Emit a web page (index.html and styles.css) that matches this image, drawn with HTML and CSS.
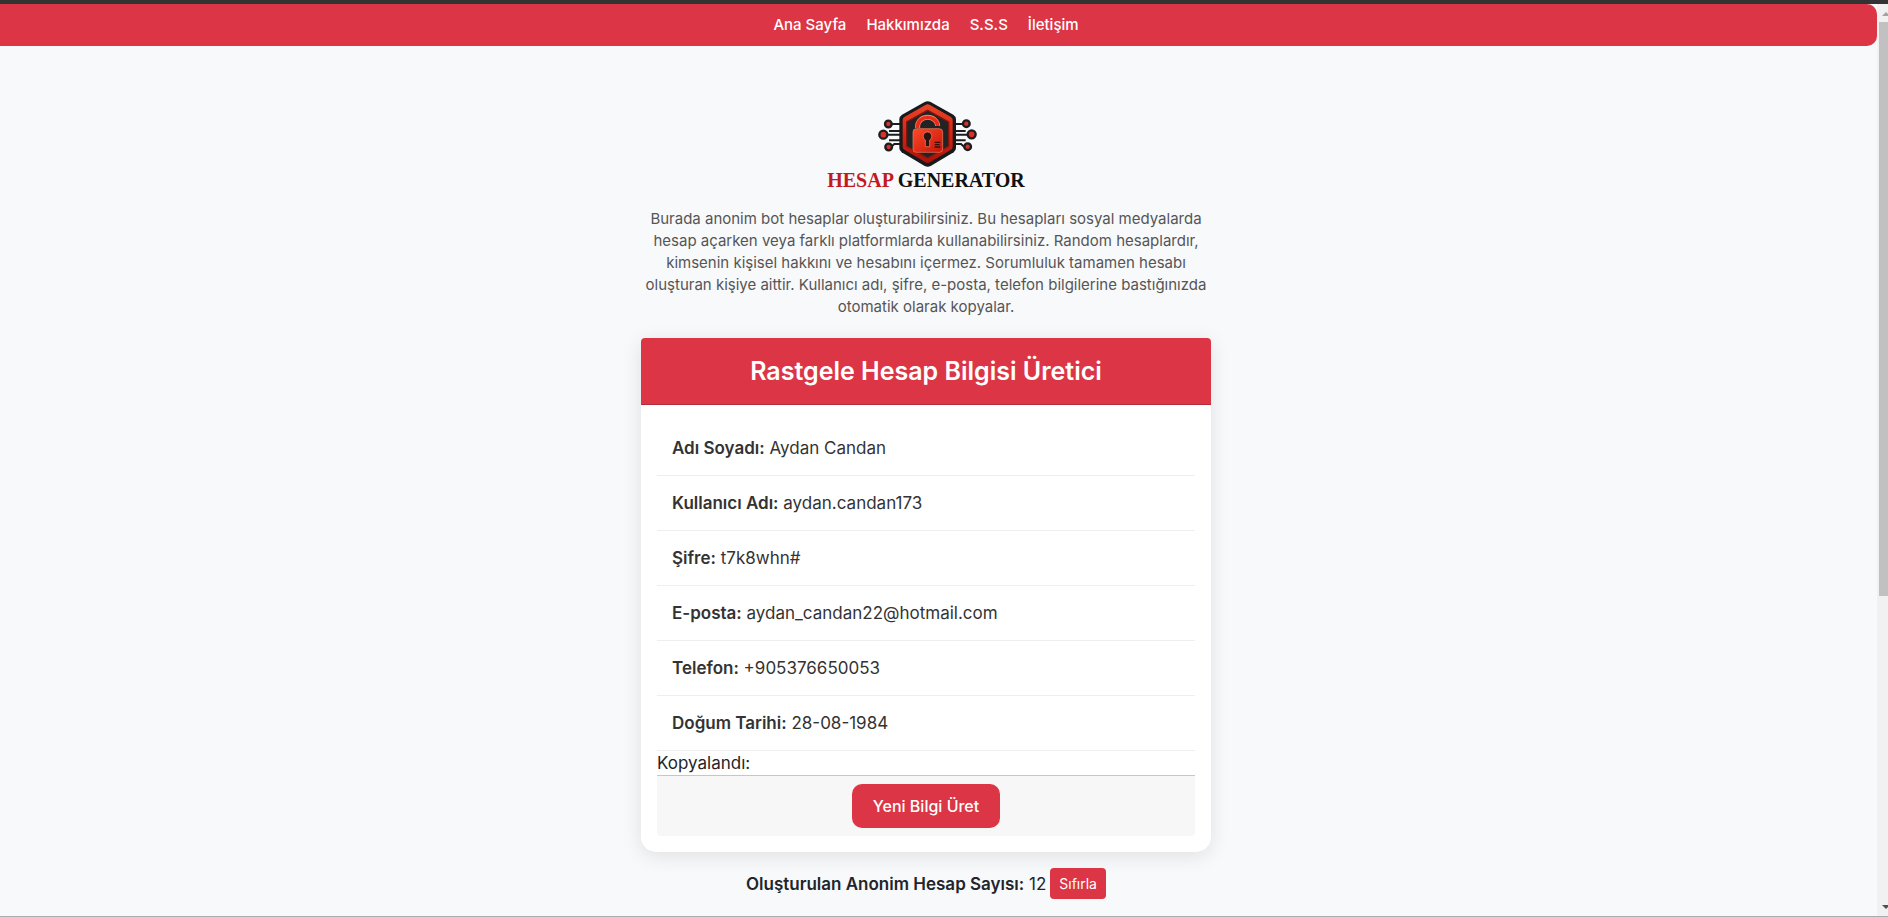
FILE: index.html
```html
<!DOCTYPE html>
<html lang="tr">
<head>
    <meta charset="UTF-8">
    <meta name="viewport" content="width=device-width, initial-scale=1.0">
    <title>Hesap Generator</title>
    <link rel="stylesheet" href="styles.css">
</head>
<body>
    <div class="page">
        <nav class="navbar">
            <a href="#">Ana Sayfa</a>
            <a href="#">Hakkımızda</a>
            <a href="#">S.S.S</a>
            <a href="#">İletişim</a>
        </nav>

        <main class="container">
            <div class="logo">
                <svg class="logo-icon" viewBox="162 30 306 204" aria-hidden="true">
                    <defs>
                        <linearGradient id="red" x1="0" y1="0" x2="0" y2="1">
                            <stop offset="0" stop-color="#e8452a"/>
                            <stop offset="0.5" stop-color="#d82414"/>
                            <stop offset="1" stop-color="#a81208"/>
                        </linearGradient>
                        <linearGradient id="lock" x1="0" y1="0" x2="1" y2="1">
                            <stop offset="0" stop-color="#fb4a28"/>
                            <stop offset="1" stop-color="#c81408"/>
                        </linearGradient>
                    </defs>
                    <!-- circuit lines -->
                    <g fill="none" stroke="#1b1d1f" stroke-width="6">
                        <path d="M208 102H240M204 123H240M196 134H240M204 151H240M210 171L220 162H240"/>
                        <path d="M430 102H400M434 123H400M440 134H400M434 151H400M430 171L420 162H400"/>
                    </g>
                    <g fill="#d9302a" stroke="#1d1c1e" stroke-width="7">
                        <circle cx="202" cy="102" r="10"/>
                        <circle cx="187" cy="134" r="12"/>
                        <circle cx="203" cy="171" r="10"/>
                        <circle cx="436" cy="101" r="10"/>
                        <circle cx="452" cy="133" r="12"/>
                        <circle cx="440" cy="170" r="10"/>
                    </g>
                    <!-- shield -->
                    <path d="M311 36Q320 31 329 36L397 74Q405 79 405 88V174Q405 182 398 187L329 228Q320 233 311 228L242 187Q235 182 235 174V88Q235 79 243 74Z" fill="#17191b"/>
                    <path d="M313 45Q320 41 327 45L390 81Q395 84 395 90V171Q395 176 390 179L327 217Q320 221 313 217L250 179Q245 176 245 171V90Q245 84 250 81Z" fill="url(#red)"/>
                    <path d="M320 61L383 96V168L320 204L257 168V96Z" fill="#222325" stroke="#7c1710" stroke-width="4"/>
                    <!-- padlock -->
                    <path d="M290 114V108A30 26 0 0 1 350 108" fill="none" stroke="#ff8260" stroke-width="15"/>
                    <path d="M290 114V108A30 26 0 0 1 350 108" fill="none" stroke="#e52d18" stroke-width="10"/>
                    <rect x="276" y="116" width="89" height="71" rx="10" fill="url(#lock)" stroke="#f58264" stroke-width="2"/>
                    <path d="M313 170V150A13 13 0 1 1 326 150V170Z" fill="#2b1512" stroke="#ff8d68" stroke-width="2"/>
                    <path d="M341 157H358M341 164H356M341 171H358" stroke="#3c0f0c" stroke-width="4"/>
                </svg>
                <div class="logo-text"><span>HESAP</span> GENERATOR</div>
            </div>

            <p class="description">Burada anonim bot hesaplar oluşturabilirsiniz. Bu hesapları sosyal medyalarda hesap açarken veya farklı platformlarda kullanabilirsiniz. Random hesaplardır, kimsenin kişisel hakkını ve hesabını içermez. Sorumluluk tamamen hesabı oluşturan kişiye aittir. Kullanıcı adı, şifre, e-posta, telefon bilgilerine bastığınızda otomatik olarak kopyalar.</p>

            <div class="card">
                <h1 class="card-header">Rastgele Hesap Bilgisi Üretici</h1>
                <div class="card-body">
                    <p class="info"><strong>Adı Soyadı:</strong> Aydan Candan</p>
                    <p class="info"><strong>Kullanıcı Adı:</strong> aydan.candan173</p>
                    <p class="info"><strong>Şifre:</strong> t7k8whn#</p>
                    <p class="info"><strong>E-posta:</strong> aydan_candan22@hotmail.com</p>
                    <p class="info"><strong>Telefon:</strong> +905376650053</p>
                    <p class="info"><strong>Doğum Tarihi:</strong> 28-08-1984</p>
                    <div class="copied">Kopyalandı:</div>
                    <div class="card-footer">
                        <button type="button" class="btn-generate">Yeni Bilgi Üret</button>
                    </div>
                </div>
            </div>

            <div class="counter">
                <span><strong>Oluşturulan Anonim Hesap Sayısı:</strong> 12</span>
                <button type="button" class="btn-reset">Sıfırla</button>
            </div>
        </main>
    </div>

    <div class="scrollbar" aria-hidden="true">
        <svg class="scroll-arrow" viewBox="0 0 17 17"><path d="M5 12L9 8L13 12Z" fill="#a3a3a3"/></svg>
        <div class="scroll-track"><div class="scroll-thumb"></div></div>
        <svg class="scroll-arrow" viewBox="0 0 17 17"><path d="M5 6L9 10L13 6Z" fill="#505050"/></svg>
    </div>
</body>
</html>
```

FILE: styles.css
```css
* {
    box-sizing: border-box;
}
body {
    font-family: Inter, "Open Sans", sans-serif;
    font-size: 17px;
    line-height: 24px;
    margin: 0;
    height: 100vh;
    display: flex;
    overflow: hidden;
    background-color: #f8f9fb;
    color: #212529;
    border-top: 4px solid #333;
    border-bottom: 1px solid #a9abae;
}
.page {
    flex: 1;
    margin-left: -25px;
}
.navbar {
    display: flex;
    justify-content: center;
    gap: 20px;
    padding: 9px;
    background-color: #dc3545;
    border-radius: 10px;
}
.navbar a {
    color: white;
    font-size: 15px;
    font-weight: 500;
    text-decoration: none;
}
.container {
    max-width: 570px;
    margin: 0 auto;
    padding-top: 54px;
}
.logo {
    display: flex;
    flex-direction: column;
    align-items: center;
}
.logo-icon {
    width: 102px;
    height: 68px;
}
.logo-text {
    font-family: "Liberation Serif", serif;
    font-size: 20px;
    font-weight: bold;
    line-height: 24px;
    color: #111;
}
.logo-text span {
    color: #c31a1f;
}
.description {
    margin: 16px 0 20px;
    font-size: 15px;
    line-height: 22px;
    text-align: center;
    color: #555;
}
.card {
    background-color: white;
    border-radius: 4px 4px 15px 15px;
    box-shadow: 0 4px 20px rgba(0,0,0,0.1);
}
.card-header {
    margin: 0;
    padding: 18px 16px;
    font-size: 25px;
    font-weight: 600;
    line-height: 30px;
    text-align: center;
    color: white;
    background-color: #dc3545;
    border-bottom: 1px solid #b52c3a;
    border-radius: 4px 4px 0 0;
}
.card-body {
    padding: 16px;
}
.info {
    margin: 0;
    padding: 15px;
    color: #333;
    border-bottom: 1px solid #eee;
}
strong {
    font-weight: 600;
}
.card-footer {
    padding: 8px;
    text-align: center;
    background-color: #f7f7f7;
    border-top: 1px solid #c6c6c6;
    border-radius: 0 0 4px 4px;
}
button {
    font-family: inherit;
    color: white;
    background-color: #dc3545;
    border: none;
    cursor: pointer;
}
.btn-generate {
    display: block;
    margin: 0 auto;
    padding: 10px 21px;
    font-size: 16px;
    font-weight: 500;
    line-height: 24px;
    border-radius: 10px;
}
.counter {
    display: flex;
    justify-content: center;
    align-items: center;
    gap: 4px;
    margin-top: 16px;
}
.btn-reset {
    padding: 5px 9px;
    font-size: 14px;
    line-height: 21px;
    border-radius: 4px;
}
.scrollbar {
    display: flex;
    flex-direction: column;
    width: 11px;
    overflow: hidden;
    background-color: #f1f1f1;
}
.scroll-arrow {
    flex: none;
    width: 17px;
    height: 17px;
}
.scroll-track {
    flex: 1;
    padding: 1px 0 0 2px;
}
.scroll-thumb {
    height: 65.4%;
    background-color: #c1c1c1;
}
```
